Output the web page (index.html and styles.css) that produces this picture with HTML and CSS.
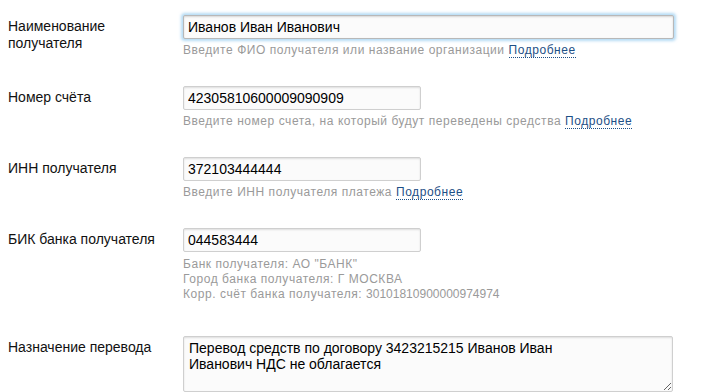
FILE: index.html
```html
<!DOCTYPE html>
<html lang="ru">
<head>
<meta charset="utf-8">
<link rel="stylesheet" href="styles.css">
</head>
<body>
<form class="form">
  <div class="row">
    <label class="label">Наименование<br>получателя</label>
    <div class="field">
      <input class="input input-wide input-focus" type="text" value="Иванов Иван Иванович">
      <div class="hint">Введите ФИО получателя или название организации <a class="more" href="#">Подробнее</a></div>
    </div>
  </div>
  <div class="row">
    <label class="label">Номер счёта</label>
    <div class="field">
      <input class="input" type="text" value="42305810600009090909">
      <div class="hint">Введите номер счета, на который будут переведены средства <a class="more" href="#">Подробнее</a></div>
    </div>
  </div>
  <div class="row">
    <label class="label">ИНН получателя</label>
    <div class="field">
      <input class="input" type="text" value="372103444444">
      <div class="hint">Введите ИНН получателя платежа <a class="more" href="#">Подробнее</a></div>
    </div>
  </div>
  <div class="row row-bank">
    <label class="label">БИК банка получателя</label>
    <div class="field">
      <input class="input" type="text" value="044583444">
      <div class="hint hint-bank">Банк получателя: АО "БАНК"<br>Город банка получателя: Г МОСКВА<br>Корр. счёт банка получателя: <span class="num">30101810900000974974</span></div>
    </div>
  </div>
  <div class="row">
    <label class="label">Назначение перевода</label>
    <div class="field">
      <textarea class="textarea">Перевод средств по договору 3423215215 Иванов Иван Иванович НДС не облагается</textarea>
    </div>
  </div>
</form>
</body>
</html>
```

FILE: styles.css
```css
html, body {
  margin: 0;
  padding: 0;
  background: #ffffff;
  overflow: hidden;
}
body {
  padding: 15px 8px 0 8px;
  font-family: "Liberation Sans", Arial, Helvetica, sans-serif;
  font-size: 14px;
  color: #111;
}
.form {
  display: flex;
  flex-direction: column;
}
.row {
  display: flex;
  align-items: flex-start;
  margin-bottom: 28px;
}
.row-bank {
  margin-bottom: 34px;
}
.label {
  width: 175px;
  flex: none;
  line-height: 17px;
  padding-top: 3px;
  color: #111;
}
.field {
  display: flex;
  flex-direction: column;
  align-items: flex-start;
}
.input {
  box-sizing: border-box;
  width: 238px;
  height: 24px;
  padding: 0 4px;
  margin: 0;
  font-family: inherit;
  font-size: 14px;
  color: #000;
  background: #fbfbfb;
  border: 1px solid #cfcfcf;
  border-radius: 2px;
  box-shadow: inset 0 1px 2px rgba(0,0,0,0.12);
  outline: none;
}
.input-wide {
  width: 491px;
}
.input-focus {
  border-color: #b8b8b8;
  box-shadow: inset 0 1px 2px rgba(0,0,0,0.15), 0 0 3px 2px rgba(120,190,235,0.55);
}
.hint {
  margin-top: 4px;
  font-size: 12px;
  letter-spacing: 0.55px;
  line-height: 15px;
  color: #9a9a9a;
}
.hint-bank {
  margin-top: 5px;
}
.num {
  letter-spacing: 0;
}
.more {
  color: #1d4f86;
  text-decoration: none;
  border-bottom: 1px dotted #1d4f86;
}
.textarea {
  box-sizing: border-box;
  width: 490px;
  height: 56px;
  padding: 3px 70px 3px 5px;
  margin: 0;
  font-family: inherit;
  font-size: 14px;
  line-height: 16px;
  color: #000;
  background: #fbfbfb;
  border: 1px solid #cfcfcf;
  border-radius: 2px;
  box-shadow: inset 0 1px 2px rgba(0,0,0,0.12);
  resize: both;
  outline: none;
}
```
